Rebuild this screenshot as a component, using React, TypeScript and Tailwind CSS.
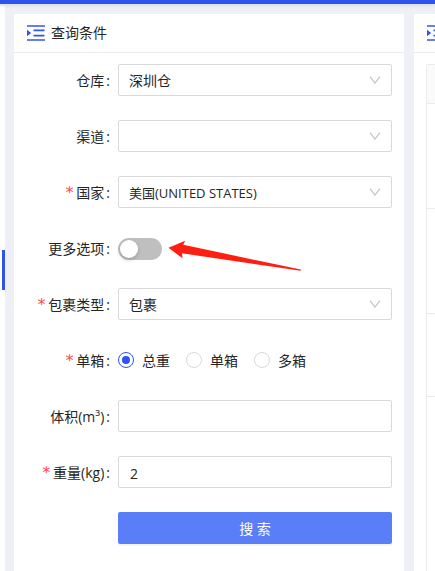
import React, { useState } from "react";

interface FieldProps {
  label: React.ReactNode;
  htmlFor?: string;
  required?: boolean;
  children: React.ReactNode;
}

interface SelectBoxProps {
  id: string;
  options: string[];
  value: string;
  onChange: (value: string) => void;
  /** Smaller text for long option names */
  compact?: boolean;
}

const controlClass =
  "block h-8 w-full appearance-none rounded-xs border border-[#d9d9d9] bg-white pt-0.5 text-[#262626] outline-none focus:border-[#2f54eb]";

const labelClass = "flex h-8 w-[104px] flex-none items-center justify-end pt-0.5 text-[#262626]";

const PanelIcon: React.FC = () => (
  <svg viewBox="0 0 18 16" className="h-4 w-[18px] flex-none" aria-hidden="true">
    <path d="M0 0h18v2H0zM0 14h18v2H0z" fill="#6480f0" />
    <path d="M6.5 4.6h11v1.7h-11zM6.5 9.8h11v1.7h-11z" fill="#2f54eb" />
    <path d="M0 4.8l4.2 3.2L0 11.2z" fill="#2f54eb" />
  </svg>
);

const Field: React.FC<FieldProps> = ({ label, htmlFor, required, children }) => {
  const content = (
    <>
      {required && <span className="mr-0.5 font-['DejaVu_Sans_Mono',monospace] text-base text-[#ff4d4f]">*</span>}
      <span>{label}</span>
      <span className="mr-2 ml-0.5">:</span>
    </>
  );

  return (
    <div className="flex">
      {htmlFor ? (
        <label htmlFor={htmlFor} className={labelClass}>
          {content}
        </label>
      ) : (
        <div className={labelClass}>{content}</div>
      )}
      <div className="relative min-w-0 flex-1">{children}</div>
    </div>
  );
};

const SelectBox: React.FC<SelectBoxProps> = ({ id, options, value, onChange, compact }) => (
  <>
    <select
      id={id}
      value={value}
      onChange={(e) => onChange(e.target.value)}
      className={`${controlClass} px-2.5 ${compact ? "text-[13px]" : "text-sm"}`}
    >
      {options.map((option) => (
        <option key={option} value={option}>
          {option}
        </option>
      ))}
    </select>
    <svg
      viewBox="0 0 12 8"
      className="pointer-events-none absolute top-3 right-[11px] h-2 w-3"
      fill="none"
      stroke="#bfbfbf"
      strokeWidth="1.2"
      aria-hidden="true"
    >
      <path d="M1 .5l5 6.5 5-6.5" />
    </svg>
  </>
);

const boxTypes = ["总重", "单箱", "多箱"];

const App: React.FC = () => {
  const [warehouse, setWarehouse] = useState<string>("深圳仓");
  const [channel, setChannel] = useState<string>("");
  const [country, setCountry] = useState<string>("美国(UNITED STATES)");
  const [packageType, setPackageType] = useState<string>("包裹");
  const [boxType, setBoxType] = useState<string>("总重");
  const [moreOptions, setMoreOptions] = useState<boolean>(false);
  const [volume, setVolume] = useState<string>("");
  const [weight, setWeight] = useState<string>("2");

  return (
    <div className="flex h-screen flex-col overflow-hidden bg-[#eff0f5] font-['Open_Sans','Noto_Sans_CJK_SC',sans-serif] text-sm text-[#262626]">
      <header className="relative z-10 h-1 flex-none bg-[#2f54eb] shadow-[0_1px_4px_rgba(0,21,41,0.12)]" />

      <div className="flex min-h-0 flex-1">
        <nav className="mt-0.5 w-[5px] flex-none bg-white pt-[244px]">
          <div className="ml-auto h-10 w-[3px] bg-[#2f54eb]" />
        </nav>

        <main className="ml-[9px] flex min-w-0 flex-1 gap-2.5 pt-2.5">
          <section className="min-w-0 flex-1 bg-white">
            <div className="flex h-[39px] items-center gap-1.5 border-b border-[#ebebeb] px-[13px]">
              <PanelIcon />
              <h2>查询条件</h2>
            </div>

            <form className="flex flex-col gap-6 pt-[11px] pr-3" onSubmit={(e) => e.preventDefault()}>
              <Field label="仓库" htmlFor="warehouse">
                <SelectBox id="warehouse" options={["深圳仓"]} value={warehouse} onChange={setWarehouse} />
              </Field>

              <Field label="渠道" htmlFor="channel">
                <SelectBox id="channel" options={[""]} value={channel} onChange={setChannel} />
              </Field>

              <Field label="国家" htmlFor="country" required>
                <SelectBox
                  id="country"
                  options={["美国(UNITED STATES)"]}
                  value={country}
                  onChange={setCountry}
                  compact
                />
              </Field>

              <Field label="更多选项" htmlFor="more">
                <div className="flex h-8 items-center pt-0.5">
                  <button
                    id="more"
                    type="button"
                    role="switch"
                    aria-checked={moreOptions}
                    onClick={() => setMoreOptions(!moreOptions)}
                    className={`flex h-[22px] w-11 items-center rounded-full px-0.5 ${
                      moreOptions ? "justify-end bg-[#2f54eb]" : "justify-start bg-[#bfbfbf]"
                    }`}
                  >
                    <span className="size-[18px] rounded-full bg-white shadow-[0_2px_4px_rgba(0,35,11,0.2)]" />
                  </button>
                </div>
                {/* arrow pointing at the switch */}
                <svg
                  viewBox="0 0 134 32"
                  className="pointer-events-none absolute top-2 left-[50px] h-8 w-[134px]"
                  aria-hidden="true"
                >
                  <path d="M.5 7.8L17.2.8l-2 4L132.8 29.6v1.2L14 13.3l.5 5z" fill="#ff1f12" />
                </svg>
              </Field>

              <Field label="包裹类型" htmlFor="packageType" required>
                <SelectBox id="packageType" options={["包裹"]} value={packageType} onChange={setPackageType} />
              </Field>

              <Field label="单箱" required>
                <div role="radiogroup" aria-label="单箱" className="flex h-8 items-center gap-4">
                  {boxTypes.map((type) => (
                    <label key={type} className="flex items-center gap-2">
                      <input
                        type="radio"
                        name="boxType"
                        checked={boxType === type}
                        onChange={() => setBoxType(type)}
                        className="grid size-4 appearance-none place-content-center rounded-full border border-[#d9d9d9] bg-white before:size-2 before:rounded-full checked:border-[#2f54eb] checked:before:bg-[#2f54eb]"
                      />
                      <span className="pt-0.5">{type}</span>
                    </label>
                  ))}
                </div>
              </Field>

              <Field label="体积(m³)" htmlFor="volume">
                <input
                  id="volume"
                  type="text"
                  value={volume}
                  onChange={(e) => setVolume(e.target.value)}
                  className={`${controlClass} px-[11px] text-sm`}
                />
              </Field>

              <Field label="重量(kg)" htmlFor="weight" required>
                <input
                  id="weight"
                  type="text"
                  value={weight}
                  onChange={(e) => setWeight(e.target.value)}
                  className={`${controlClass} px-[11px] text-sm`}
                />
              </Field>

              <div className="pl-[104px]">
                <button
                  type="submit"
                  className="h-8 w-full rounded-xs bg-[#597ef7] pt-0.5 text-white shadow-[0_2px_0_rgba(0,0,0,0.045)]"
                >
                  搜 索
                </button>
              </div>
            </form>
          </section>

          {/* result panel, cut off by the window edge */}
          <section className="w-[21px] flex-none overflow-hidden bg-white">
            <div className="flex h-[39px] items-center border-b border-[#ebebeb] pl-[13px]">
              <PanelIcon />
            </div>
            <div className="mt-[11px] ml-3 h-full rounded-tl-xs border-t border-l border-[#ebebeb]">
              <div className="h-[39px] border-b border-[#ebebeb] bg-[#fafafa]" />
              <div className="h-[105px] border-b border-[#ebebeb]" />
              <div className="h-[105px] border-b border-[#ebebeb]" />
              <div className="h-[83px] border-b border-[#ebebeb]" />
            </div>
          </section>
        </main>
      </div>
    </div>
  );
};

export default App;
